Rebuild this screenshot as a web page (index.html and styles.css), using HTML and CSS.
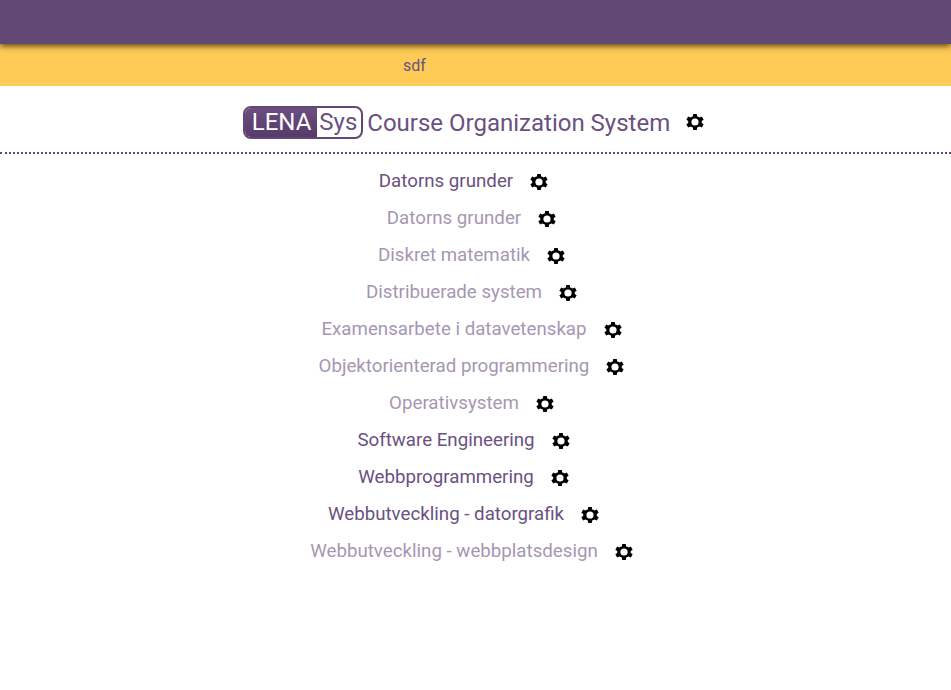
FILE: index.html
```html
<!DOCTYPE html>
<html>
	<head>
		<meta charset="UTF-8">
		<title>LenaSYS</title>
		<link rel="stylesheet" href="styles.css">
	</head>
	<body>
		<svg class="defs" width="0" height="0">
			<symbol id="gear" viewBox="2 2 20 20">
				<path d="M19.500 13a7.600 7.600 0 0 0 0-2l2.100-1.600-2-3.500-2.500 1a7.600 7.600 0 0 0-2.700-1L14 3h-4l-.4 2.900a7.600 7.600 0 0 0-2.700 1l-2.500-1-2 3.500L4.500 11a7.600 7.600 0 0 0 0 2l-2.100 1.600 2 3.500 2.500-1a7.600 7.600 0 0 0 2.700 1L10 21h4l.4-2.900a7.600 7.600 0 0 0 2.700-1l2.500 1 2-3.500z"/>
				<circle class="gear-hole" cx="12" cy="12" r="4"/>
			</symbol>
		</svg>

		<header class="topbar"></header>
		<div class="subbar"><span class="subbar-text">sdf</span></div>

		<div class="title-row">
			<div class="logo"><span class="logo-lena">LENA</span><span class="logo-sys">Sys</span></div>
			<div class="title-text">Course Organization System</div>
			<svg class="gear"><use href="#gear"/></svg>
		</div>

		<ul class="courses">
			<li class="course active"><a>Datorns grunder</a><svg class="gear"><use href="#gear"/></svg></li>
			<li class="course"><a>Datorns grunder</a><svg class="gear"><use href="#gear"/></svg></li>
			<li class="course"><a>Diskret matematik</a><svg class="gear"><use href="#gear"/></svg></li>
			<li class="course"><a>Distribuerade system</a><svg class="gear"><use href="#gear"/></svg></li>
			<li class="course"><a>Examensarbete i datavetenskap</a><svg class="gear"><use href="#gear"/></svg></li>
			<li class="course"><a>Objektorienterad programmering</a><svg class="gear"><use href="#gear"/></svg></li>
			<li class="course"><a>Operativsystem</a><svg class="gear"><use href="#gear"/></svg></li>
			<li class="course active"><a>Software Engineering</a><svg class="gear"><use href="#gear"/></svg></li>
			<li class="course active"><a>Webbprogrammering</a><svg class="gear"><use href="#gear"/></svg></li>
			<li class="course active"><a>Webbutveckling - datorgrafik</a><svg class="gear"><use href="#gear"/></svg></li>
			<li class="course"><a>Webbutveckling - webbplatsdesign</a><svg class="gear"><use href="#gear"/></svg></li>
		</ul>
	</body>
</html>
```

FILE: styles.css
```css
body{
	margin:0;
	background:#fff;
	font-family:Roboto,"Liberation Sans",sans-serif;
	color:#6a5180;
}
ul{margin:0; padding:0; list-style:none;}
.defs{display:block;}

.topbar{
	height:44px;
	background:#614875;
	box-shadow:0 2px 6px rgba(70,50,10,.9);
	position:relative;
}
.subbar{
	height:42px;
	background:#fdcb56;
	font-size:16px;
	line-height:44px;
	padding-left:403px;
}

.title-row{
	display:flex;
	justify-content:center;
	align-items:center;
	height:60px;
	padding-top:6px;
	padding-right:4px;
	border-bottom:2px dotted #614875;
}
.logo{
	display:flex;
	height:33px;
	border:2px solid #614875;
	border-radius:8px;
	box-sizing:border-box;
	overflow:hidden;
	font-size:24px;
	line-height:29px;
	margin-right:4px;
}
.logo-lena{
	background:linear-gradient(#6b4f80,#553a6b);
	color:#fff;
	padding:0 6px 0 7px;
}
.logo-sys{
	padding:0 4px 0 2px;
}
.title-text{
	font-size:24px;
	line-height:32px;
	padding-top:2px;
	margin-right:16px;
}

.gear{
	width:18px;
	height:18px;
	flex:none;
	fill:#000;
}
.gear-hole{fill:#fff;}

.courses{padding-top:8px;}
.course{
	display:flex;
	justify-content:center;
	align-items:center;
	height:37px;
	font-size:18.72px;
	padding-right:8px;
}
.course a{
	margin-right:18px;
	opacity:.6;
}
.course .gear{margin:2px 0 0 -1px;}
.course.active{padding-right:24px;}
.course.active a{opacity:1;}
```
